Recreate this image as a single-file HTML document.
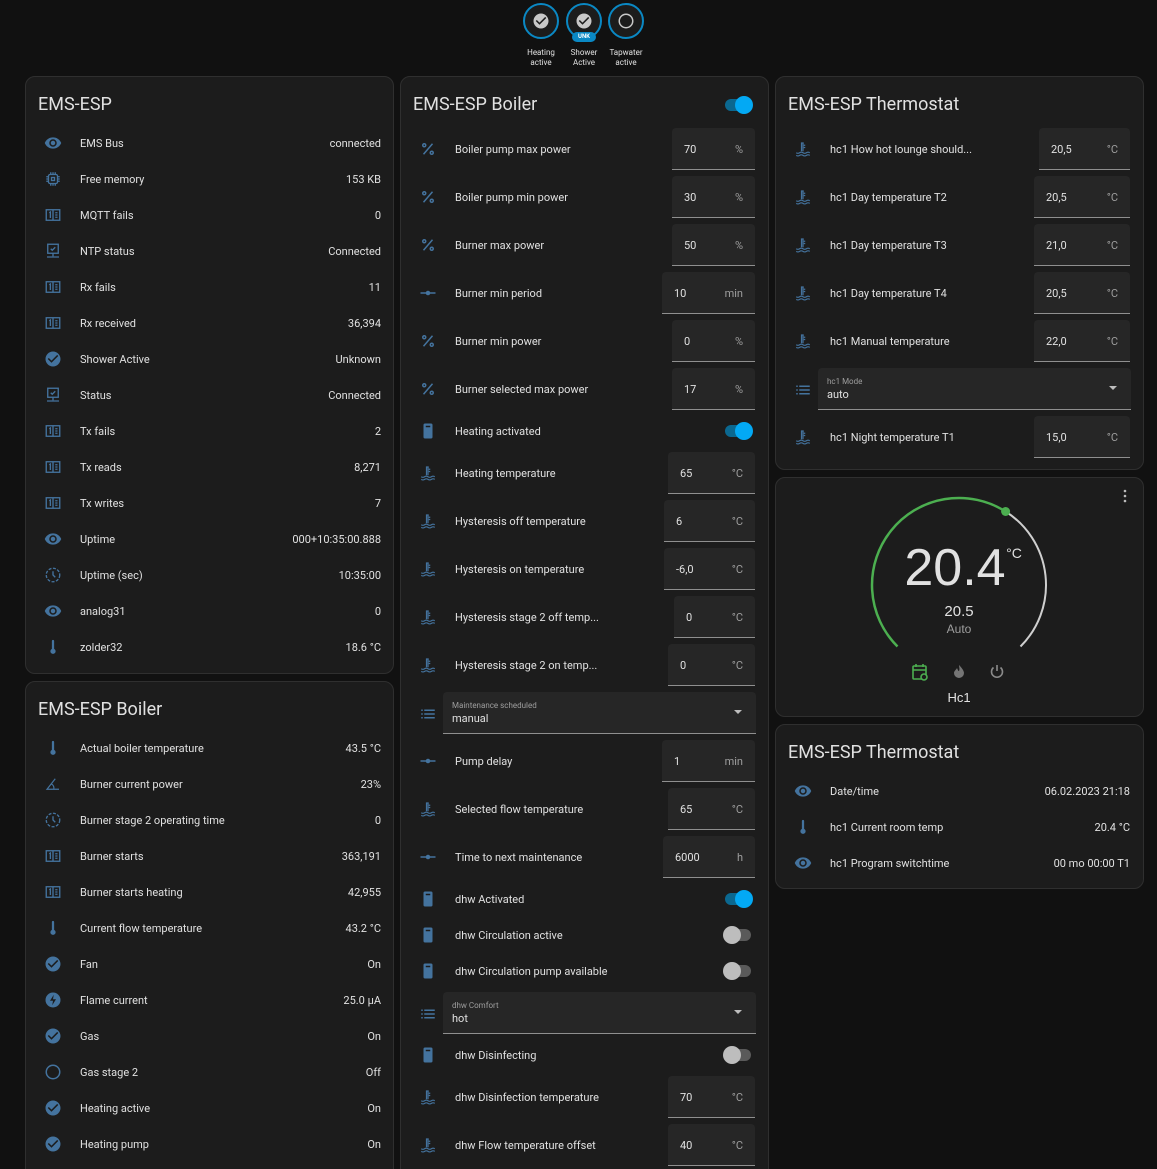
<!DOCTYPE html>
<html><head><meta charset="utf-8">
<style>
*{box-sizing:border-box;margin:0;padding:0}
html{width:1157px;height:1169px;overflow:hidden;background:#111111}
body{width:1157px;height:1169px;background:#111111;font-family:"Roboto","Liberation Sans",sans-serif;color:#e1e1e1;position:relative;overflow:hidden}
.card{position:absolute;background:#1c1c1c;border:1px solid #2f2f2f;border-radius:10px}
.t{position:absolute;font-size:18px;color:#e1e1e1;line-height:22px;margin-top:1px}
.ic{position:absolute;width:18px;height:18px}
.lb{position:absolute;font-size:11px;line-height:14px;color:#e1e1e1;white-space:nowrap;margin-top:1px}
.v{position:absolute;font-size:11px;line-height:14px;color:#e1e1e1;text-align:right;white-space:nowrap;margin-top:1px}
.c1 .ic{left:44px}.c1 .lb{left:80px}.c1 .v{right:776px}
.c2 .ic{left:419px}.c2 .lb{left:455px}
.c3 .ic{left:794px}.c3 .lb{left:830px}.c3 .v{right:27px}
.inp{position:absolute;height:42px;background:#262626;border-bottom:1px solid #8f8f8f;border-radius:4px 4px 0 0}
.inp .n{position:absolute;left:12px;top:15px;font-size:11px;line-height:14px;color:#e1e1e1}
.inp .u{position:absolute;right:12px;top:15px;font-size:11px;line-height:14px;color:#9e9e9e}
.sel{position:absolute;height:42px;background:#262626;border-bottom:1px solid #8f8f8f;border-radius:4px 4px 0 0}
.sel .s1{position:absolute;left:9px;top:9px;font-size:8px;color:#9e9e9e}
.sel .s2{position:absolute;left:9px;top:20px;font-size:11px;color:#e1e1e1}
.sel .ar{position:absolute;right:14px;top:18px;width:0;height:0;border-left:4px solid transparent;border-right:4px solid transparent;border-top:4px solid #bdbdbd}
.tg{position:absolute;width:30px;height:20px}
.tg .tr{position:absolute;left:2px;top:4px;width:26px;height:12px;border-radius:6px;background:#0b6890}
.tg .kn{position:absolute;right:0;top:1px;width:18px;height:18px;border-radius:50%;background:#03a9f4}
.tg.off .tr{background:#5a5a5a}
.tg.off .kn{left:0;right:auto;background:#bdbdbd}
.badge{position:absolute;width:36px;height:36px;border-radius:50%;border:2px solid #0a88c4;background:#1c1c1c}
.bl{position:absolute;font-size:8px;line-height:10px;text-align:center;width:50px;color:#e1e1e1}
</style></head><body>
<svg width="0" height="0" style="position:absolute">
<defs>
<symbol id="eye" viewBox="0 0 24 24"><path fill="#44739e" d="M12,9A3,3 0 0,0 9,12A3,3 0 0,0 12,15A3,3 0 0,0 15,12A3,3 0 0,0 12,9M12,17A5,5 0 0,1 7,12A5,5 0 0,1 12,7A5,5 0 0,1 17,12A5,5 0 0,1 12,17M12,4.5C7,4.5 2.73,7.610 1,12C2.73,16.39 7,19.5 12,19.5C17,19.5 21.27,16.39 23,12C21.27,7.61 17,4.5 12,4.5Z"/></symbol>
<symbol id="chk" viewBox="0 0 24 24"><path fill="#44739e" d="M12 2C6.5 2 2 6.5 2 12S6.5 22 12 22 22 17.5 22 12 17.5 2 12 2M10 17L5 12L6.41 10.59L10 14.17L17.59 6.58L19 8L10 17Z"/></symbol>
<symbol id="circ" viewBox="0 0 24 24"><path fill="#44739e" d="M12,20A8,8 0 0,1 4,12A8,8 0 0,1 12,4A8,8 0 0,1 20,12A8,8 0 0,1 12,20M12,2A10,10 0 0,0 2,12A10,10 0 0,0 12,22A10,10 0 0,0 22,12A10,10 0 0,0 12,2Z"/></symbol>
<symbol id="therm" viewBox="0 0 24 24"><path fill="#44739e" d="M10.5 4a1.5 1.5 0 0 1 3 0v10.5a3.5 3.5 0 1 1-3 0Z"/></symbol>
<symbol id="pct" viewBox="0 0 24 24"><g fill="none" stroke="#44739e" stroke-width="2"><path d="M18 5L6 19"/><circle cx="7" cy="7" r="2"/><circle cx="17" cy="17" r="2"/></g></symbol>
<symbol id="chip" viewBox="0 0 24 24"><g fill="none" stroke="#44739e" stroke-width="1.8"><rect x="6" y="6" width="12" height="12" rx="2"/><rect x="10" y="10" width="4" height="4"/><path d="M9 3v3M12 3v3M15 3v3M9 18v3M12 18v3M15 18v3M3 9h3M3 12h3M3 15h3M18 9h3M18 12h3M18 15h3"/></g></symbol>
<symbol id="cnt" viewBox="0 0 24 24"><g fill="none" stroke="#44739e" stroke-width="1.8"><rect x="3" y="5" width="18" height="14"/><path d="M12 5v14M7 9l1.5-1v8M15 9h3M15 12h3M15 15h3"/></g></symbol>
<symbol id="mon" viewBox="0 0 24 24"><g fill="none" stroke="#44739e" stroke-width="1.8"><rect x="5" y="3" width="14" height="12"/><path d="M9 9l2 2 4-4M12 15v4M4 20h16"/></g></symbol>
<symbol id="clk" viewBox="0 0 24 24"><g fill="none" stroke="#44739e" stroke-width="1.8"><circle cx="12" cy="12" r="9" stroke-dasharray="4 2"/><path d="M12 7v5l3 3"/></g></symbol>
<symbol id="flash" viewBox="0 0 24 24"><circle cx="12" cy="12" r="10" fill="#44739e"/><path d="M13 5l-5 8h4l-1 6 5-8h-4z" fill="#1c1c1c"/></symbol>
<symbol id="wt" viewBox="0 0 24 24"><g fill="none" stroke="#44739e" stroke-width="1.6"><path d="M10 15V4h3M13 7h2M13 10h2M12 4v11"/><path d="M3 17c1.5 1 3 1 4.5 0s3-1 4.5 0 3 1 4.5 0 3-1 4.5 0M3 20.5c1.5 1 3 1 4.5 0s3-1 4.5 0 3 1 4.5 0 3-1 4.5 0"/></g></symbol>
<symbol id="list" viewBox="0 0 24 24"><g fill="#44739e"><rect x="3" y="6" width="2" height="2"/><rect x="3" y="11" width="2" height="2"/><rect x="3" y="16" width="2" height="2"/><rect x="7" y="6" width="14" height="2"/><rect x="7" y="11" width="14" height="2"/><rect x="7" y="16" width="14" height="2"/></g></symbol>
<symbol id="sld" viewBox="0 0 24 24"><rect x="2" y="11" width="20" height="2" fill="#44739e"/><circle cx="12" cy="12" r="3" fill="#44739e"/></symbol>
<symbol id="boil" viewBox="0 0 24 24"><rect x="6" y="2" width="12" height="20" rx="2" fill="#44739e"/><rect x="9" y="5" width="6" height="2" fill="#1c1c1c"/></symbol>
<symbol id="ang" viewBox="0 0 24 24"><g fill="none" stroke="#44739e" stroke-width="1.6"><path d="M15 5L4 19h16M10 12a6 6 0 0 1 3 7"/></g></symbol>
</defs></svg>

<div class="badge" style="left:523px;top:3px"><svg style="position:absolute;left:7px;top:7px" width="18" height="18" viewBox="0 0 24 24"><path fill="#c8c8c8" d="M12 2C6.5 2 2 6.5 2 12S6.5 22 12 22 22 17.5 22 12 17.5 2 12 2M10 17L5 12L6.41 10.59L10 14.17L17.59 6.58L19 8L10 17Z"/></svg></div>
<div class="badge" style="left:566px;top:3px"><svg style="position:absolute;left:7px;top:7px" width="18" height="18" viewBox="0 0 24 24"><path fill="#c8c8c8" d="M12 2C6.5 2 2 6.5 2 12S6.5 22 12 22 22 17.5 22 12 17.5 2 12 2M10 17L5 12L6.41 10.59L10 14.17L17.59 6.58L19 8L10 17Z"/></svg></div>
<div style="position:absolute;left:572px;top:32px;width:24px;height:10px;border-radius:5px;background:#0a88c4;font-size:6px;line-height:10px;text-align:center;color:#fff;font-weight:bold">UNK</div>
<div class="badge" style="left:608px;top:3px"><svg style="position:absolute;left:7px;top:7px" width="18" height="18" viewBox="0 0 24 24"><path fill="#c8c8c8" d="M12,20A8,8 0 0,1 4,12A8,8 0 0,1 12,4A8,8 0 0,1 20,12A8,8 0 0,1 12,20M12,2A10,10 0 0,0 2,12A10,10 0 0,0 12,22A10,10 0 0,0 22,12A10,10 0 0,0 12,2Z"/></svg></div>
<div class="bl" style="left:516px;top:48px">Heating<br>active</div>
<div class="bl" style="left:559px;top:48px">Shower<br>Active</div>
<div class="bl" style="left:601px;top:48px">Tapwater<br>active</div>

<div class="card" style="left:25px;top:76px;width:369px;height:598px"></div>
<div class="card" style="left:25px;top:681px;width:369px;height:520px"></div>
<div class="card" style="left:400px;top:76px;width:369px;height:1130px"></div>
<div class="card" style="left:775px;top:76px;width:369px;height:394px"></div>
<div class="card" style="left:775px;top:477px;width:369px;height:240px"></div>
<div class="card" style="left:775px;top:724px;width:369px;height:165px"></div>

<div class="t" style="left:38px;top:93px">EMS-ESP</div>
<div class="t" style="left:38px;top:698px">EMS-ESP Boiler</div>
<div class="t" style="left:413px;top:93px">EMS-ESP Boiler</div>
<div class="t" style="left:788px;top:93px">EMS-ESP Thermostat</div>
<div class="t" style="left:788px;top:741px">EMS-ESP Thermostat</div>

<div class="c1">
<svg class="ic" style="top:134px"><use href="#eye"/></svg><div class="lb" style="top:136px">EMS Bus</div><div class="v" style="top:136px">connected</div>
<svg class="ic" style="top:170px"><use href="#chip"/></svg><div class="lb" style="top:172px">Free memory</div><div class="v" style="top:172px">153 KB</div>
<svg class="ic" style="top:206px"><use href="#cnt"/></svg><div class="lb" style="top:208px">MQTT fails</div><div class="v" style="top:208px">0</div>
<svg class="ic" style="top:242px"><use href="#mon"/></svg><div class="lb" style="top:244px">NTP status</div><div class="v" style="top:244px">Connected</div>
<svg class="ic" style="top:278px"><use href="#cnt"/></svg><div class="lb" style="top:280px">Rx fails</div><div class="v" style="top:280px">11</div>
<svg class="ic" style="top:314px"><use href="#cnt"/></svg><div class="lb" style="top:316px">Rx received</div><div class="v" style="top:316px">36,394</div>
<svg class="ic" style="top:350px"><use href="#chk"/></svg><div class="lb" style="top:352px">Shower Active</div><div class="v" style="top:352px">Unknown</div>
<svg class="ic" style="top:386px"><use href="#mon"/></svg><div class="lb" style="top:388px">Status</div><div class="v" style="top:388px">Connected</div>
<svg class="ic" style="top:422px"><use href="#cnt"/></svg><div class="lb" style="top:424px">Tx fails</div><div class="v" style="top:424px">2</div>
<svg class="ic" style="top:458px"><use href="#cnt"/></svg><div class="lb" style="top:460px">Tx reads</div><div class="v" style="top:460px">8,271</div>
<svg class="ic" style="top:494px"><use href="#cnt"/></svg><div class="lb" style="top:496px">Tx writes</div><div class="v" style="top:496px">7</div>
<svg class="ic" style="top:530px"><use href="#eye"/></svg><div class="lb" style="top:532px">Uptime</div><div class="v" style="top:532px">000+10:35:00.888</div>
<svg class="ic" style="top:566px"><use href="#clk"/></svg><div class="lb" style="top:568px">Uptime (sec)</div><div class="v" style="top:568px">10:35:00</div>
<svg class="ic" style="top:602px"><use href="#eye"/></svg><div class="lb" style="top:604px">analog31</div><div class="v" style="top:604px">0</div>
<svg class="ic" style="top:638px"><use href="#therm"/></svg><div class="lb" style="top:640px">zolder32</div><div class="v" style="top:640px">18.6 °C</div>

<svg class="ic" style="top:739px"><use href="#therm"/></svg><div class="lb" style="top:741px">Actual boiler temperature</div><div class="v" style="top:741px">43.5 °C</div>
<svg class="ic" style="top:775px"><use href="#ang"/></svg><div class="lb" style="top:777px">Burner current power</div><div class="v" style="top:777px">23%</div>
<svg class="ic" style="top:811px"><use href="#clk"/></svg><div class="lb" style="top:813px">Burner stage 2 operating time</div><div class="v" style="top:813px">0</div>
<svg class="ic" style="top:847px"><use href="#cnt"/></svg><div class="lb" style="top:849px">Burner starts</div><div class="v" style="top:849px">363,191</div>
<svg class="ic" style="top:883px"><use href="#cnt"/></svg><div class="lb" style="top:885px">Burner starts heating</div><div class="v" style="top:885px">42,955</div>
<svg class="ic" style="top:919px"><use href="#therm"/></svg><div class="lb" style="top:921px">Current flow temperature</div><div class="v" style="top:921px">43.2 °C</div>
<svg class="ic" style="top:955px"><use href="#chk"/></svg><div class="lb" style="top:957px">Fan</div><div class="v" style="top:957px">On</div>
<svg class="ic" style="top:991px"><use href="#flash"/></svg><div class="lb" style="top:993px">Flame current</div><div class="v" style="top:993px">25.0 µA</div>
<svg class="ic" style="top:1027px"><use href="#chk"/></svg><div class="lb" style="top:1029px">Gas</div><div class="v" style="top:1029px">On</div>
<svg class="ic" style="top:1063px"><use href="#circ"/></svg><div class="lb" style="top:1065px">Gas stage 2</div><div class="v" style="top:1065px">Off</div>
<svg class="ic" style="top:1099px"><use href="#chk"/></svg><div class="lb" style="top:1101px">Heating active</div><div class="v" style="top:1101px">On</div>
<svg class="ic" style="top:1135px"><use href="#chk"/></svg><div class="lb" style="top:1137px">Heating pump</div><div class="v" style="top:1137px">On</div>
</div>

<div class="c2">
<div class="tg" style="left:723px;top:95px"><div class="tr"></div><div class="kn"></div></div>

<svg class="ic" style="top:140px"><use href="#pct"/></svg><div class="lb" style="top:142px">Boiler pump max power</div>
<div class="inp" style="left:672px;top:128px;width:83px"><span class="n">70</span><span class="u">%</span></div>
<svg class="ic" style="top:188px"><use href="#pct"/></svg><div class="lb" style="top:190px">Boiler pump min power</div>
<div class="inp" style="left:672px;top:176px;width:83px"><span class="n">30</span><span class="u">%</span></div>
<svg class="ic" style="top:236px"><use href="#pct"/></svg><div class="lb" style="top:238px">Burner max power</div>
<div class="inp" style="left:672px;top:224px;width:83px"><span class="n">50</span><span class="u">%</span></div>
<svg class="ic" style="top:284px"><use href="#sld"/></svg><div class="lb" style="top:286px">Burner min period</div>
<div class="inp" style="left:662px;top:272px;width:93px"><span class="n">10</span><span class="u">min</span></div>
<svg class="ic" style="top:332px"><use href="#pct"/></svg><div class="lb" style="top:334px">Burner min power</div>
<div class="inp" style="left:672px;top:320px;width:83px"><span class="n">0</span><span class="u">%</span></div>
<svg class="ic" style="top:380px"><use href="#pct"/></svg><div class="lb" style="top:382px">Burner selected max power</div>
<div class="inp" style="left:672px;top:368px;width:83px"><span class="n">17</span><span class="u">%</span></div>
<svg class="ic" style="top:422px"><use href="#boil"/></svg><div class="lb" style="top:424px">Heating activated</div>
<div class="tg" style="left:723px;top:421px"><div class="tr"></div><div class="kn"></div></div>
<svg class="ic" style="top:464px"><use href="#wt"/></svg><div class="lb" style="top:466px">Heating temperature</div>
<div class="inp" style="left:668px;top:452px;width:87px"><span class="n">65</span><span class="u">°C</span></div>
<svg class="ic" style="top:512px"><use href="#wt"/></svg><div class="lb" style="top:514px">Hysteresis off temperature</div>
<div class="inp" style="left:664px;top:500px;width:91px"><span class="n">6</span><span class="u">°C</span></div>
<svg class="ic" style="top:560px"><use href="#wt"/></svg><div class="lb" style="top:562px">Hysteresis on temperature</div>
<div class="inp" style="left:664px;top:548px;width:91px"><span class="n">-6,0</span><span class="u">°C</span></div>
<svg class="ic" style="top:608px"><use href="#wt"/></svg><div class="lb" style="top:610px">Hysteresis stage 2 off temp...</div>
<div class="inp" style="left:674px;top:596px;width:81px"><span class="n">0</span><span class="u">°C</span></div>
<svg class="ic" style="top:656px"><use href="#wt"/></svg><div class="lb" style="top:658px">Hysteresis stage 2 on temp...</div>
<div class="inp" style="left:668px;top:644px;width:87px"><span class="n">0</span><span class="u">°C</span></div>
<svg class="ic" style="top:705px"><use href="#list"/></svg>
<div class="sel" style="left:443px;top:692px;width:313px"><span class="s1">Maintenance scheduled</span><span class="s2">manual</span><span class="ar"></span></div>
<svg class="ic" style="top:752px"><use href="#sld"/></svg><div class="lb" style="top:754px">Pump delay</div>
<div class="inp" style="left:662px;top:740px;width:93px"><span class="n">1</span><span class="u">min</span></div>
<svg class="ic" style="top:800px"><use href="#wt"/></svg><div class="lb" style="top:802px">Selected flow temperature</div>
<div class="inp" style="left:668px;top:788px;width:87px"><span class="n">65</span><span class="u">°C</span></div>
<svg class="ic" style="top:848px"><use href="#sld"/></svg><div class="lb" style="top:850px">Time to next maintenance</div>
<div class="inp" style="left:663px;top:836px;width:92px"><span class="n">6000</span><span class="u">h</span></div>
<svg class="ic" style="top:890px"><use href="#boil"/></svg><div class="lb" style="top:892px">dhw Activated</div>
<div class="tg" style="left:723px;top:889px"><div class="tr"></div><div class="kn"></div></div>
<svg class="ic" style="top:926px"><use href="#boil"/></svg><div class="lb" style="top:928px">dhw Circulation active</div>
<div class="tg off" style="left:723px;top:925px"><div class="tr"></div><div class="kn"></div></div>
<svg class="ic" style="top:962px"><use href="#boil"/></svg><div class="lb" style="top:964px">dhw Circulation pump available</div>
<div class="tg off" style="left:723px;top:961px"><div class="tr"></div><div class="kn"></div></div>
<svg class="ic" style="top:1005px"><use href="#list"/></svg>
<div class="sel" style="left:443px;top:992px;width:313px"><span class="s1">dhw Comfort</span><span class="s2">hot</span><span class="ar"></span></div>
<svg class="ic" style="top:1046px"><use href="#boil"/></svg><div class="lb" style="top:1048px">dhw Disinfecting</div>
<div class="tg off" style="left:723px;top:1045px"><div class="tr"></div><div class="kn"></div></div>
<svg class="ic" style="top:1088px"><use href="#wt"/></svg><div class="lb" style="top:1090px">dhw Disinfection temperature</div>
<div class="inp" style="left:668px;top:1076px;width:87px"><span class="n">70</span><span class="u">°C</span></div>
<svg class="ic" style="top:1136px"><use href="#wt"/></svg><div class="lb" style="top:1138px">dhw Flow temperature offset</div>
<div class="inp" style="left:668px;top:1124px;width:87px"><span class="n">40</span><span class="u">°C</span></div>
</div>

<div class="c3">
<svg class="ic" style="top:140px"><use href="#wt"/></svg><div class="lb" style="top:142px">hc1 How hot lounge should...</div>
<div class="inp" style="left:1039px;top:128px;width:91px"><span class="n">20,5</span><span class="u">°C</span></div>
<svg class="ic" style="top:188px"><use href="#wt"/></svg><div class="lb" style="top:190px">hc1 Day temperature T2</div>
<div class="inp" style="left:1034px;top:176px;width:96px"><span class="n">20,5</span><span class="u">°C</span></div>
<svg class="ic" style="top:236px"><use href="#wt"/></svg><div class="lb" style="top:238px">hc1 Day temperature T3</div>
<div class="inp" style="left:1034px;top:224px;width:96px"><span class="n">21,0</span><span class="u">°C</span></div>
<svg class="ic" style="top:284px"><use href="#wt"/></svg><div class="lb" style="top:286px">hc1 Day temperature T4</div>
<div class="inp" style="left:1034px;top:272px;width:96px"><span class="n">20,5</span><span class="u">°C</span></div>
<svg class="ic" style="top:332px"><use href="#wt"/></svg><div class="lb" style="top:334px">hc1 Manual temperature</div>
<div class="inp" style="left:1034px;top:320px;width:96px"><span class="n">22,0</span><span class="u">°C</span></div>
<svg class="ic" style="top:381px"><use href="#list"/></svg>
<div class="sel" style="left:818px;top:368px;width:313px"><span class="s1">hc1 Mode</span><span class="s2">auto</span><span class="ar"></span></div>
<svg class="ic" style="top:428px"><use href="#wt"/></svg><div class="lb" style="top:430px">hc1 Night temperature T1</div>
<div class="inp" style="left:1034px;top:416px;width:96px"><span class="n">15,0</span><span class="u">°C</span></div>

<svg class="ic" style="top:782px"><use href="#eye"/></svg><div class="lb" style="top:784px">Date/time</div><div class="v" style="top:784px">06.02.2023 21:18</div>
<svg class="ic" style="top:818px"><use href="#therm"/></svg><div class="lb" style="top:820px">hc1 Current room temp</div><div class="v" style="top:820px">20.4 °C</div>
<svg class="ic" style="top:854px"><use href="#eye"/></svg><div class="lb" style="top:856px">hc1 Program switchtime</div><div class="v" style="top:856px">00 mo 00:00 T1</div>
</div>

<svg style="position:absolute;left:0;top:0" width="1157" height="1169">
<path d="M897.5 646.5 A87 87 0 0 1 1005.6 511.5" fill="none" stroke="#4caf50" stroke-width="2.5"/>
<path d="M1005.6 511.5 A87 87 0 0 1 1020.5 646.5" fill="none" stroke="#cfcfcf" stroke-width="2"/>
<circle cx="1005.6" cy="511.5" r="4.5" fill="#4caf50"/>
<circle cx="1125" cy="491" r="1.3" fill="#bbb"/><circle cx="1125" cy="496" r="1.3" fill="#bbb"/><circle cx="1125" cy="501" r="1.3" fill="#bbb"/>
<g transform="translate(912,664)" fill="none" stroke="#4caf50" stroke-width="1.6"><rect x="1" y="2" width="13" height="13" rx="1"/><path d="M1 6h13M4 0v3M11 0v3"/><circle cx="12" cy="13" r="3" fill="#1c1c1c"/></g>
<path d="M959 665c3 3 5 6 5 8a5 5 0 0 1-10 0c0-2 2-3 3-5 1 2 1 3 2 3 1-2 0-4 0-6z" fill="#757575"/>
<g fill="none" stroke="#8a8a8a" stroke-width="1.6"><path d="M997 665v6"/><path d="M993.5 667.5a5.5 5.5 0 1 0 7 0"/></g>
<text x="955" y="585" text-anchor="middle" font-family="Liberation Sans, sans-serif" font-size="52" fill="#e1e1e1">20.4</text>
<text x="1014" y="558" text-anchor="middle" font-family="Liberation Sans, sans-serif" font-size="14" fill="#e1e1e1">°C</text>
<text x="959" y="616" text-anchor="middle" font-family="Liberation Sans, sans-serif" font-size="15" fill="#e1e1e1">20.5</text>
<text x="959" y="633" text-anchor="middle" font-family="Liberation Sans, sans-serif" font-size="12" fill="#9e9e9e">Auto</text>
<text x="959" y="702" text-anchor="middle" font-family="Liberation Sans, sans-serif" font-size="13" fill="#e1e1e1">Hc1</text>
</svg>
</body></html>
